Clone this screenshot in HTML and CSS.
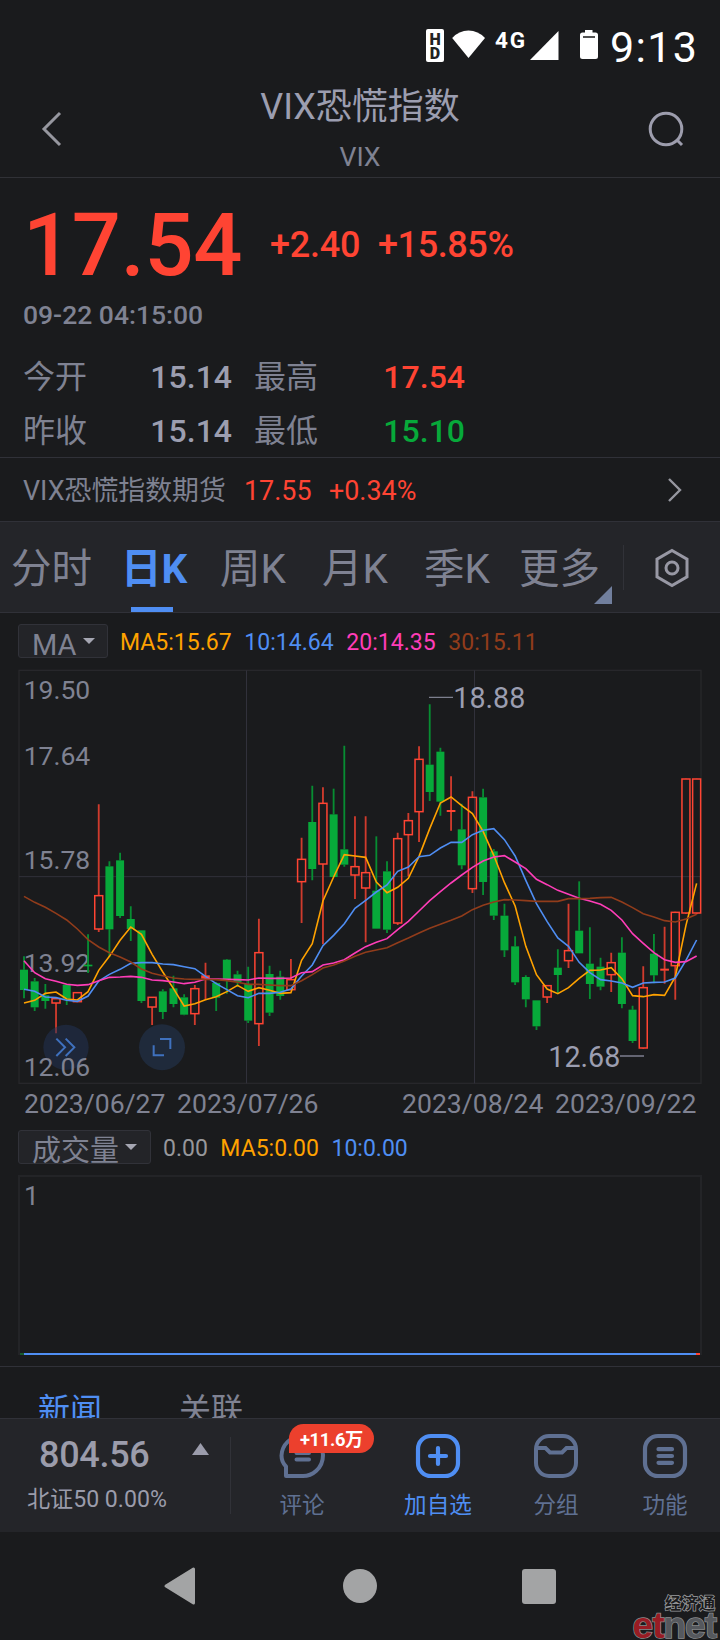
FILE: index.html
```html
<!DOCTYPE html>
<html lang="zh-CN">
<head>
<meta charset="utf-8">
<title>VIX恐慌指数</title>
<link rel="stylesheet" href="styles.css">
</head>
<body>
<div class="status">
  <svg class="status-icons" width="176" height="40" viewBox="424 26 176 40">
    <rect x="426" y="29" width="18" height="33" rx="2" fill="#fff"/>
    <text class="hd" x="435" y="44.500">H</text><text class="hd" x="435" y="59">D</text>
    <path d="M468.500 58 L452.200 38 Q459 30.500 468.500 30.500 Q478 30.500 485 38 Z" fill="#fff"/>
    <text class="net" x="495" y="47.500" textLength="30">4G</text>
    <path d="M530 60 L558.500 31 V60 Z" fill="#fff"/>
    <path d="M585 30 H592.500 V32.500 H595.500 Q598 32.500 598 35 V56.500 Q598 59 595.500 59 H582.500 Q580 59 580 56.500 V35 Q580 32.500 582.500 32.500 H585 Z" fill="#fff"/>
    <path d="M583 37 H595" stroke="#333" stroke-width="1.700"/>
  </svg>
  <span class="clock">9:13</span>
</div>
<header class="header">
  <svg class="back" width="24" height="40" viewBox="0 0 24 40"><path d="M20 4 L4 20 L20 36" fill="none" stroke="#96979f" stroke-width="3"/></svg>
  <div class="titles"><h1>VIX恐慌指数</h1><p>VIX</p></div>
  <svg class="search" width="40" height="40" viewBox="0 0 40 40"><circle cx="20" cy="20" r="15.800" fill="none" stroke="#9d9dad" stroke-width="3"/><path d="M31 31 L36 36" stroke="#9d9dad" stroke-width="3"/></svg>
</header>
<section class="quote">
  <div class="price-row"><span class="price">17.54</span><span class="chg">+2.40</span><span class="pct">+15.85%</span></div>
  <div class="time">09-22 04:15:00</div>
  <div class="stats">
    <span>今开</span><b>15.14</b><span>最高</span><b class="red">17.54</b>
    <span>昨收</span><b>15.14</b><span>最低</span><b class="green">15.10</b>
  </div>
</section>
<section class="futures">
  <span class="fname">VIX恐慌指数期货</span><span class="fprice">17.55</span><span class="fpct">+0.34%</span>
  <svg class="chev" width="16" height="28" viewBox="0 0 16 28"><path d="M2 3 L13 14 L2 25" fill="none" stroke="#96979f" stroke-width="2.400"/></svg>
</section>
<nav class="tabs">
  <span class="tab t1">分时</span>
  <span class="tab t2 on">日K</span>
  <span class="tab t3">周K</span>
  <span class="tab t3">月K</span>
  <span class="tab t3">季K</span>
  <span class="tab t6">更多<svg class="corner" width="18" height="18" viewBox="0 0 18 18"><path d="M18 0 V18 H0 Z" fill="#717f9d"/></svg></span>
  <i class="split"></i>
  <svg class="gear" width="36" height="40" viewBox="0 0 36 40"><path d="M18 2.500 L33 11.200 V28.800 L18 37.500 L3 28.800 V11.200 Z" fill="none" stroke="#9898a4" stroke-width="3"/><circle cx="18" cy="20" r="6" fill="none" stroke="#9898a4" stroke-width="3"/></svg>
</nav>
<div class="legend ma">
  <span class="pick pick-ma">MA<svg width="12" height="6" viewBox="0 0 12 6"><path d="M0 0 H12 L6 6 Z" fill="#a5a6b2"/></svg></span>
  <span class="orange">MA5:15.67</span><span class="blue">10:14.64</span><span class="pink">20:14.35</span><span class="brown">30:15.11</span>
</div>
<svg class="kline" id="kline" width="720" height="423" viewBox="0 0 2160 1269">
  <rect x="57" y="10" width="2046" height="1239" fill="none" stroke="#27272b" stroke-width="4"/>
  <path d="M57 629 H2103 M739.500 10 V1249 M1423.500 10 V1249" stroke="#31313b" stroke-width="3"/>
  <g class="axis">
    <text x="71" y="96">19.50</text><text x="71" y="294">17.64</text><text x="71" y="606">15.78</text><text x="71" y="915">13.92</text>
  </g>
  <g id="plot" transform="translate(0,-20)"></g>
  <circle cx="198" cy="1141" r="68" fill="#213358" fill-opacity=".5"/>
  <circle cx="486" cy="1141" r="69" fill="#1f2a3b"/>
  <g fill="none" stroke="#3f71be" stroke-width="6"><path d="M169 1115 L195 1141 L169 1167 M197 1115 L223 1141 L197 1167"/><path d="M480 1116 H511 V1146 M461 1135 V1165 H492"/></g>
  <text class="axis" x="71" y="1227">12.06</text>
  <g class="peak"><text x="1360" y="123">18.88</text><text x="1645" y="1200">12.68</text></g>
  <path d="M1287 91 H1359 M1860 1167 H1932" stroke="#7d7f8e" stroke-width="4"/>
</svg>
<div class="dates"><span>2023/06/27</span><span>2023/07/26</span><span>2023/08/24</span><span>2023/09/22</span></div>
<div class="legend vol">
  <span class="pick pick-vol">成交量<svg width="12" height="6" viewBox="0 0 12 6"><path d="M0 0 H12 L6 6 Z" fill="#a5a6b2"/></svg></span>
  <span class="gray">0.00</span><span class="orange">MA5:0.00</span><span class="blue">10:0.00</span>
</div>
<div class="volume"><span>1</span><div class="zero"></div></div>
<div class="news"><span class="blue">新闻</span><span>关联</span></div>
<footer class="dock">
  <div class="index"><div class="idx-top"><b>804.56</b><svg width="17" height="12" viewBox="0 0 17 12"><path d="M8.500 0 L17 12 H0 Z" fill="#9b9cab"/></svg></div><div class="idx-sub">北证50 0.00%</div></div>
  <div class="act a1">
    <svg width="48" height="48" viewBox="0 0 48 48" fill="none" stroke="#5f7092" stroke-width="4"><path d="M8 44 V34.500 Q3.500 30 3.500 23.500 A20.500 20.500 0 0 1 24 4 A20.500 20.500 0 0 1 45 23 Q45 33 38 39 Q32.500 44 25 44 Z" stroke-linejoin="round"/><path d="M18.500 21 H31 M18.500 27.500 H31" stroke-linecap="round"/></svg>
    <em>+11.6万</em><span>评论</span></div>
  <div class="act a2 blue">
    <svg width="48" height="48" viewBox="0 0 48 48" fill="none" stroke="#4f8ef3" stroke-width="4.200"><rect x="4" y="4" width="40" height="40" rx="13"/><path d="M24 16 V32 M16 24 H32" stroke-linecap="round"/></svg><span>加自选</span></div>
  <div class="act a3">
    <svg width="48" height="48" viewBox="0 0 48 48" fill="none" stroke="#5f7092" stroke-width="4"><rect x="4" y="4" width="40" height="40" rx="13"/><path d="M5 16 H13.500 L18 20.500 H30 L34.500 16 H43"/></svg><span>分组</span></div>
  <div class="act a4">
    <svg width="48" height="48" viewBox="0 0 48 48" fill="none" stroke="#5f7092" stroke-width="4.200"><rect x="4" y="4" width="40" height="40" rx="13"/><path d="M17.500 17.200 H31 M17.500 24 H31 M17.500 30.800 H31" stroke-linecap="round"/></svg><span>功能</span></div>
</footer>
<div class="sysnav">
  <svg width="34" height="40" viewBox="0 0 34 40"><path d="M30.500 3 V37 L3 20 Z" fill="#a3a4a5" stroke="#a3a4a5" stroke-width="3" stroke-linejoin="round"/></svg>
  <i class="home"></i><i class="recent"></i>
  <div class="mark"><small>经济通</small><strong><span>et</span>net</strong></div>
</div>
<script src="chart.js"></script>
</body>
</html>
```
FILE: styles.css
```css
* { box-sizing: border-box; }
body { margin: 0; width: 720px; height: 1640px; overflow: hidden; background: #1a1b1d; color: #7f8292; font-family: Roboto, "Noto Sans CJK SC", sans-serif; }
svg { display: block; flex: none; }
h1, p { margin: 0; font-weight: 400; }
i, em { font-style: normal; }
.red { color: #ff4433 !important; }
.green { color: #07a93a !important; }
.orange { color: #ffa200; }
.blue { color: #4f8ef3; }
.pink { color: #ff3db8; }
.brown { color: #913c1b; }
.gray { color: #97979b; }

.status { height: 84px; display: flex; padding: 26px 0 0 424px; }
.hd { font: 900 16px Roboto, sans-serif; text-anchor: middle; fill: #222; }
.net { font: 700 22.500px Roboto, sans-serif; fill: #fff; }
.clock { margin-left: 10px; font-size: 43px; line-height: 42px; letter-spacing: 1.300px; color: #fff; }

.header { height: 94px; display: flex; border-bottom: 1px solid #303136; }
.back { margin: 25px 0 0 40px; }
.titles { width: 582px; padding-left: 10px; text-align: center; }
.titles h1 { font-size: 36px; line-height: 44px; margin: 1px 0 10px; color: #9c9eb0; }
.titles p { font-size: 26.700px; line-height: 36px; }
.search { margin-top: 25px; }

.quote { height: 280px; padding: 22px 0 0 23px; border-bottom: 1px solid #303138; }
.price-row { display: flex; height: 90px; font-weight: 500; color: #ff4433; }
.price { width: 247px; font-size: 86.500px; line-height: 92px; letter-spacing: -.300px; }
.chg, .pct { margin-top: 25px; font-size: 36px; line-height: 40px; letter-spacing: -.200px; }
.chg { width: 108px; }
.pct { letter-spacing: -.400px; }
.time { margin: 10px 0 20px; font-size: 26.500px; line-height: 30px; font-weight: 500; }
.stats { display: grid; grid-template-columns: 110px 121px 110px 101px; grid-auto-rows: 54px; font-size: 32px; line-height: 54px; }
.stats b { font-weight: 500; color: #9c9eb0; text-align: right; padding-right: 22px; }
.stats b.red, .stats b.green { padding-right: 0; }

.futures { height: 63px; display: flex; align-items: center; padding-left: 23px; font-size: 26.900px; line-height: 63px; }
.futures span { padding-top: 4px; }
.fname { width: 221px; }
.fprice { width: 85px; color: #ff4433; }
.fpct { width: 338px; color: #ff4433; }

.tabs { height: 92px; display: flex; background: #242529; border-top: 1px solid #303138; border-bottom: 1px solid #303138; padding-left: 11px; font-size: 40.500px; line-height: 95px; }
.tab { position: relative; white-space: nowrap; }
.t1 { width: 110px; }
.t2 { width: 99px; }
.t3 { width: 102px; }
.t6 { width: 102px; margin-left: -7px; }
.on { color: #4f8ef3; font-weight: 700; }
.on::after { content: ""; position: absolute; left: 10px; bottom: 0; width: 42px; height: 5px; background: #4f8ef3; }
.corner { position: absolute; right: 9px; bottom: 8px; }
.split { width: 1px; height: 45px; margin: 23px 30px 0 2px; background: #313238; }
.gear { margin-top: 26px; }

.legend { display: flex; font-size: 23px; }
.ma { height: 57px; padding: 11px 0 0 18px; line-height: 37px; }
.vol { height: 47px; padding: 2px 0 0 18px; line-height: 37px; }
.pick { display: flex; height: 34px; border: 1px solid #313239; border-radius: 3px; background: #232428; font-size: 29px; line-height: 40px; padding-left: 13px; }
.pick svg { margin: 13px 0 0 6px; }
.pick-ma { width: 90px; margin-right: 12px; }
.pick-vol { width: 133px; margin-right: 12px; line-height: 40px; }
.ma > span + span { margin-right: 12.800px; }
.vol > span + span { margin-right: 12.500px; }
.kline { margin-top: -3px; }
.axis { font-size: 79.500px; fill: #7f8292; }
.peak { font-size: 86px; fill: #9c9eb0; }
.dates { display: flex; height: 40px; margin-top: -2px; padding-left: 24px; font-size: 26.600px; line-height: 32px; }
.dates span { width: 153px; }
.dates span:nth-child(2) { width: 225px; }

.volume { width: 684px; height: 180px; margin-left: 18px; border: 2px solid #232427; border-bottom: 0; display: flex; flex-direction: column; justify-content: space-between; font-size: 26.700px; line-height: 32px; padding: 3px 0 0 4px; }
.zero { height: 2px; margin-left: -4px; background: linear-gradient(90deg, #175c2c 4px, #4f8ef3 4px, #4f8ef3 676px, #ff4433 676px); }
.news { height: 52px; margin-top: 11px; padding: 19px 0 0 38px; border-top: 1px solid #303138; overflow: hidden; display: flex; gap: 77px; font-size: 32px; line-height: 48px; }

.dock { height: 114px; display: flex; background: #242529; border-top: 1px solid #303138; }
.index { width: 231px; height: 77px; margin-top: 18px; border-right: 1px solid #313238; color: #9b9cab; }
.idx-top { display: flex; height: 38px; padding-left: 39px; }
.idx-top b { width: 153px; font-weight: 500; font-size: 36px; line-height: 36px; letter-spacing: -.300px; }
.idx-top svg { margin-top: 6px; }
.idx-sub { padding-left: 27px; margin-top: 8px; font-size: 23.100px; line-height: 34px; white-space: nowrap; }
.act { position: relative; width: 80px; padding-top: 13px; display: flex; flex-direction: column; align-items: center; color: #5f7092; font-size: 22.600px; line-height: 34px; }
.act span { margin-top: 9px; white-space: nowrap; }
.act.blue { color: #4f8ef3; }
.a1 { margin-left: 31px; }
.a2 { margin-left: 56px; }
.a3 { margin-left: 38px; }
.a4 { margin-left: 29px; }
.act em { position: absolute; left: 27px; top: 5px; width: 85px; height: 29px; border-radius: 15px 15px 15px 0; background: #ec402d; color: #fff; font-size: 18.300px; font-weight: 700; line-height: 31px; letter-spacing: -.300px; text-align: center; }

.sysnav { position: relative; height: 108px; display: flex; padding: 34px 0 0 163px; }
.home { width: 34px; height: 34px; margin: 3px 0 0 146px; border-radius: 50%; background: #a3a4a5; }
.recent { width: 34px; height: 35px; margin: 3px 0 0 145px; border-radius: 3px; background: #a3a4a5; }
.mark { position: absolute; right: 4px; bottom: 0; width: 88px; text-align: right; }
.mark small { display: block; font-size: 16px; font-weight: 700; line-height: 16px; letter-spacing: 1px; color: #1b1b1d; -webkit-text-stroke: 1.500px #9a9b9d; paint-order: stroke fill; }
.mark strong { display: block; font: 700 37px/28px "Liberation Sans", sans-serif; letter-spacing: -1px; color: #55585d; -webkit-text-stroke: 1.500px #8b8c8e; paint-order: stroke fill; white-space: nowrap; }
.mark strong span { color: #981c24; }
```
FILE: chart.js
```js
// direction, high, body top, body bottom, low
const candles = [
["g",888,928,989,1014],["g",953,963,1041,1052],["g",971,1005,1022,1045],["r",1010,1015,1028,1119],
["g",973,973,1015,1034],["r",996,997,1024,1024],["g",822,914,917,938],["r",432,706,806,815],
["g",603,618,807,890],["g",577,600,767,773],["g",738,776,806,842],["g",810,810,1022,1028],
["r",1010,1011,1040,1094],["g",987,993,1055,1076],["g",946,984,1031,1041],["g",1002,1011,1063,1065],
["r",974,985,1060,1094],["r",907,946,954,1018],["g",965,968,1012,1052],["g",896,898,958,1000],
["g",931,942,965,980],["g",919,971,1081,1088],["r",775,877,1090,1157],["g",916,941,1057,1067],
["g",931,949,1007,1018],["r",896,958,988,990],["r",532,597,664,788],["g",376,485,626,660],
["r",381,429,611,852],["g",385,462,650,650],["g",256,567,613,619],["r",468,619,644,716],
["r",468,637,683,846],["g",528,691,805,805],["g",603,633,808,818],["r",517,535,788,794],
["r",458,481,523,648],["r",258,297,454,545],["g",132,313,395,422],["g",262,274,424,466],
["r",348,450,454,511],["g",430,507,615,627],["r",393,411,685,698],["g",385,411,665,704],
["g",566,573,766,779],["g",730,766,870,890],["g",828,858,966,974],["g",945,950,1017,1041],
["g",1020,1020,1098,1109],["r",974,976,1010,1028],["g",867,922,944,998],["r",730,871,901,923],
["g",663,811,879,879],["g",801,910,971,1016],["g",892,919,979,990],["r",877,907,943,995],
["g",831,877,1031,1044],["g",1036,1048,1142,1148],["r",918,982,1163,1165],["g",821,880,945,969],
["r",799,926,930,970],["r",754,756,916,1018],["r",355,356,758,760],["r",355,356,758,762]
];
const averages = {
"#ffa200": [1028,1020,999,995,1016,1019,994,930,888,840,800,822,882,935,985,1037,1030,1018,1009,994,975,993,982,990,999,997,900,850,722,650,583,587,591,665,697,681,654,588,505,428,410,436,460,513,585,667,737,858,943,986,1000,982,954,930,929,922,955,1006,1009,1003,1005,950,795,669],
"#4f8ef3": [987,993,1010,1012,1020,1023,1007,962,942,927,909,907,907,911,913,919,925,948,970,988,1006,1012,999,999,996,986,947,914,856,825,790,744,720,695,674,633,620,589,585,563,546,546,523,510,505,538,587,660,730,784,833,858,906,937,958,962,968,981,968,966,965,953,900,839],
"#ff3db8": [901,937,955,963,972,975,973,961,951,950,948,951,959,961,965,970,966,956,956,957,958,959,953,954,954,953,937,934,914,908,898,878,859,846,835,808,783,752,721,694,668,644,621,602,590,586,605,625,657,673,690,702,714,722,732,750,779,820,849,877,898,906,904,887],
"#913c1b": [708,726,741,759,779,806,838,860,877,890,905,926,939,946,953,956,957,957,958,961,966,972,972,974,976,976,961,943,923,914,902,888,876,869,862,847,833,818,804,792,780,767,748,735,725,718,719,721,723,723,723,715,715,714,712,711,725,742,760,770,781,785,776,762]
};
const step = 32.03, start = 72;
let out = "";
candles.forEach(([dir, high, top, bottom, low], i) => {
  const x = start + i * step;
  const color = dir === "r" ? "#ff4433" : "#07a93a";
  const wick = dir === "r" ? "#d03b2d" : "#078d32";
  out += `<path d="M${x} ${high}V${top}M${x} ${bottom}V${low}" stroke="${wick}" stroke-width="5.5"/>`;
  if (bottom - top < 10) {
    out += `<rect x="${x - 13}" y="${top - 1}" width="26" height="${bottom - top + 2}" fill="${color}"/>`;
  } else if (dir === "r") {
    out += `<rect x="${x - 12}" y="${top}" width="24" height="${bottom - top}" fill="none" stroke="${color}" stroke-width="4.5"/>`;
  } else {
    out += `<rect x="${x - 12}" y="${top}" width="24" height="${bottom - top}" fill="${color}"/>`;
  }
});
for (const [color, ys] of Object.entries(averages)) {
  const pts = ys.map((y, i) => `${start + i * step},${y}`).join(" ");
  out += `<polyline points="${pts}" fill="none" stroke="${color}" stroke-width="4.8"/>`;
}
document.getElementById("plot").innerHTML = out;
```
